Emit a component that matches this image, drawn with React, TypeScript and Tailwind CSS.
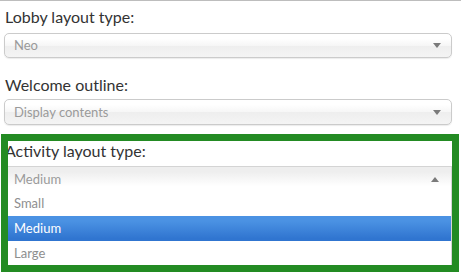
import React from "react";

const font = { fontFamily: "Lato, 'Noto Sans', sans-serif" };

function Arrow({ up }: { up?: boolean }) {
  return (
    <svg width="8" height="5" viewBox="0 0 8 5" className="shrink-0">
      {up ? (
        <polygon points="0,5 8,5 4,0" fill="#7a7a7a" />
      ) : (
        <polygon points="0,0 8,0 4,5" fill="#7a7a7a" />
      )}
    </svg>
  );
}

function Select({ value, h }: { value: string; h: string }) {
  return (
    <div
      className={`${h} ml-[4px] w-[448px] flex items-center justify-between pl-[9px] pr-[10px] rounded-[5px] border border-[#cbcbcb] bg-[linear-gradient(#fff_20%,#f6f6f6_50%,#eee_52%,#f4f4f4_100%)] shadow-[0_1px_1px_rgba(0,0,0,0.08)]`}
    >
      <span className="text-[13px] leading-none text-[#9a9a9a]">{value}</span>
      <Arrow />
    </div>
  );
}

export default function App() {
  return (
    <div className="relative w-[461px] h-[277px] bg-white overflow-hidden" style={font}>
      <div className="h-px bg-[#bdbdbd]" />
      <div className="pt-[6px]">
        <div className="pl-[5px] h-5 leading-5 text-[16px] text-[#333] mb-[6px]">Lobby layout type:</div>
        <Select value="Neo" h="h-[25px]" />
        <div className="pl-[5px] h-5 leading-5 text-[16px] text-[#333] mt-[17px] mb-[4px]">Welcome outline:</div>
        <Select value="Display contents" h="h-[26px]" />
        <div className="pl-[5px] h-5 leading-5 text-[16px] text-[#333] mt-[16px] mb-[5px]">Activity layout type:</div>
        <div className="ml-[4px] w-[448px]">
          <div className="h-[25px] flex items-center justify-between pl-[9px] pr-[12px] border-t border-x border-[#d4d4d4] bg-[linear-gradient(#eee_20%,#fff_80%)]">
            <span className="text-[13px] leading-none text-[#9a9a9a]">Medium</span>
            <Arrow up />
          </div>
          <div className="bg-white border-x border-[#d4d4d4]">
            <div className="h-[25px] flex items-center pl-[9px] text-[13px] text-[#8e8e8e]">Small</div>
            <div className="h-[25px] flex items-center pl-[9px] text-[13px] text-white bg-[linear-gradient(#4b92e3_20%,#3075d0_90%)]">Medium</div>
            <div className="h-[25px] flex items-center pl-[9px] text-[13px] text-[#8e8e8e]">Large</div>
          </div>
        </div>
      </div>
      <div className="pointer-events-none absolute left-[1px] top-[134px] w-[458px] h-[138px] border-[7px] border-[#238b23]" />
    </div>
  );
}
